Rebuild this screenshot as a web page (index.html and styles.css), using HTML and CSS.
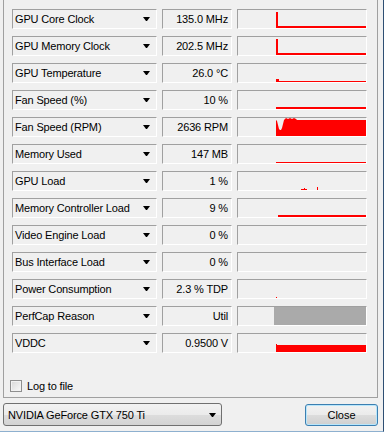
FILE: index.html
```html
<!DOCTYPE html>
<html lang="en">
<head>
    <meta charset="UTF-8">
    <title>GPU-Z Sensors</title>
    <link rel="stylesheet" href="styles.css">
</head>
<body>
    <div class="window">
        <!-- Sensors tab -->
        <section class="panel">
            <div class="rows">
                <div class="row">
                    <div class="field name">GPU Core Clock<span class="arrow"></span></div>
                    <div class="field value">135.0 MHz</div>
                    <div class="field graph"><svg width="128" height="18"><rect x="38" y="2" width="2" height="16"/><rect x="38" y="16" width="90" height="2"/></svg></div>
                </div>
                <div class="row">
                    <div class="field name">GPU Memory Clock<span class="arrow"></span></div>
                    <div class="field value">202.5 MHz</div>
                    <div class="field graph"><svg width="128" height="18"><rect x="38" y="2" width="2" height="16"/><rect x="38" y="16" width="90" height="2"/></svg></div>
                </div>
                <div class="row">
                    <div class="field name">GPU Temperature<span class="arrow"></span></div>
                    <div class="field value">26.0 °C</div>
                    <div class="field graph"><svg width="128" height="18"><rect x="38" y="15" width="3" height="2"/><rect x="38" y="17" width="90" height="1"/></svg></div>
                </div>
                <div class="row">
                    <div class="field name">Fan Speed (%)<span class="arrow"></span></div>
                    <div class="field value">10 %</div>
                    <div class="field graph"><svg width="128" height="18"><rect x="38" y="16" width="90" height="2"/></svg></div>
                </div>
                <div class="row">
                    <div class="field name">Fan Speed (RPM)<span class="arrow"></span></div>
                    <div class="field value">2636 RPM</div>
                    <div class="field graph"><svg width="128" height="18"><polygon points="38,18 38,2 39,3 40,7 41,11 42,12 43,12 44,10 45,6 46,2 47,1 48,0 50,1 52,0 54,1 56,0 58,1 59,2 128,2 128,18"/></svg></div>
                </div>
                <div class="row">
                    <div class="field name">Memory Used<span class="arrow"></span></div>
                    <div class="field value">147 MB</div>
                    <div class="field graph"><svg width="128" height="18"><rect x="38" y="17" width="90" height="1"/></svg></div>
                </div>
                <div class="row">
                    <div class="field name">GPU Load<span class="arrow"></span></div>
                    <div class="field value">1 %</div>
                    <div class="field graph"><svg width="128" height="18"><rect x="63" y="17" width="6" height="1"/><rect x="66" y="16" width="1" height="2"/><rect x="79" y="15" width="1" height="3"/></svg></div>
                </div>
                <div class="row">
                    <div class="field name">Memory Controller Load<span class="arrow"></span></div>
                    <div class="field value">9 %</div>
                    <div class="field graph"><svg width="128" height="18"><rect x="40" y="16" width="88" height="2"/></svg></div>
                </div>
                <div class="row">
                    <div class="field name">Video Engine Load<span class="arrow"></span></div>
                    <div class="field value">0 %</div>
                    <div class="field graph"><svg width="128" height="18"></svg></div>
                </div>
                <div class="row">
                    <div class="field name">Bus Interface Load<span class="arrow"></span></div>
                    <div class="field value">0 %</div>
                    <div class="field graph"><svg width="128" height="18"></svg></div>
                </div>
                <div class="row">
                    <div class="field name">Power Consumption<span class="arrow"></span></div>
                    <div class="field value">2.3 % TDP</div>
                    <div class="field graph"><svg width="128" height="18"><rect x="38" y="17" width="1" height="1"/></svg></div>
                </div>
                <div class="row">
                    <div class="field name">PerfCap Reason<span class="arrow"></span></div>
                    <div class="field value">Util</div>
                    <div class="field graph"><svg width="128" height="18"><rect class="perfcap" x="36" y="0" width="92" height="18"/></svg></div>
                </div>
                <div class="row">
                    <div class="field name">VDDC<span class="arrow"></span></div>
                    <div class="field value">0.9500 V</div>
                    <div class="field graph"><svg width="128" height="18"><rect x="38" y="11" width="90" height="7"/><rect x="38" y="10" width="1" height="1"/></svg></div>
                </div>
            </div>
            <label class="log">
                <span class="checkbox"></span>
                Log to file
            </label>
        </section>

        <div class="footer">
            <div class="combo">NVIDIA GeForce GTX 750 Ti<span class="arrow"></span></div>
            <button class="close">Close</button>
        </div>
    </div>
</body>
</html>
```

FILE: styles.css
```css
/* GPU-Z sensor window */
html, body {
    margin: 0;
    padding: 0;
    background-color: #f0f0f0;
}
body {
    font-family: "Liberation Sans", Arial, sans-serif;
    font-size: 11px;
    letter-spacing: -0.15px;
    color: #000;
}
.window {
    width: 383px;
    height: 431px;
    border-right: 1px solid #2e4f73;
    border-bottom: 1px solid #8eb0cf;
}
.panel {
    box-sizing: border-box;
    width: 375px;
    height: 398px;
    margin-left: 3px;
    padding: 9px 0 0 8px;
    border: 1px solid #a0a0a0;
    border-top: none;
}
.rows {
    display: flex;
    flex-direction: column;
    gap: 7px;
}
.row {
    display: flex;
    gap: 5px;
}
.field {
    box-sizing: border-box;
    height: 20px;
    line-height: 18px;
    border-top: 1px solid #a0a0a0;
    border-left: 1px solid #a0a0a0;
    border-right: 1px solid #fff;
    border-bottom: 1px solid #fff;
    white-space: nowrap;
}
.name {
    width: 145px;
    display: flex;
    align-items: center;
    justify-content: space-between;
    padding: 0 6px 0 2px;
}
.arrow {
    width: 1px;
    height: 0;
    border-left: 3px solid transparent;
    border-right: 3px solid transparent;
    border-top: 4px solid #000;
}
.value {
    width: 70px;
    text-align: right;
    padding-right: 3px;
}
.graph {
    width: 130px;
}
.graph svg {
    display: block;
    fill: #ff0000;
}
.graph .perfcap {
    fill: #aaaaaa;
}
.log {
    display: flex;
    align-items: center;
    gap: 5px;
    margin: 27px 0 0 -2px;
}
.checkbox {
    box-sizing: border-box;
    width: 12px;
    height: 12px;
    border: 1px solid #8f8f8f;
    background: linear-gradient(135deg, #d8d8d8, #fafafa);
    box-shadow: inset 0 0 0 1px #f2f2f2;
}
.footer {
    display: flex;
    align-items: center;
    justify-content: space-between;
    margin-top: 5px;
    padding: 0 5px 0 3px;
}
.combo {
    box-sizing: border-box;
    width: 219px;
    height: 23px;
    display: flex;
    align-items: center;
    justify-content: space-between;
    padding: 0 5px 0 4px;
    border: 1px solid #707070;
    border-radius: 3px;
    background: linear-gradient(#f2f2f2, #ebebeb 50%, #dddddd 50%, #d3d3d3);
}
.close {
    box-sizing: border-box;
    width: 73px;
    height: 22px;
    font-family: inherit;
    font-size: 11px;
    color: #000;
    border: 1px solid #3c7fb1;
    border-radius: 3px;
    background: linear-gradient(#f2f2f2, #ebebeb 50%, #dddddd 50%, #cfcfcf);
    box-shadow: inset 0 0 0 1px #b8e6fb;
}
```
